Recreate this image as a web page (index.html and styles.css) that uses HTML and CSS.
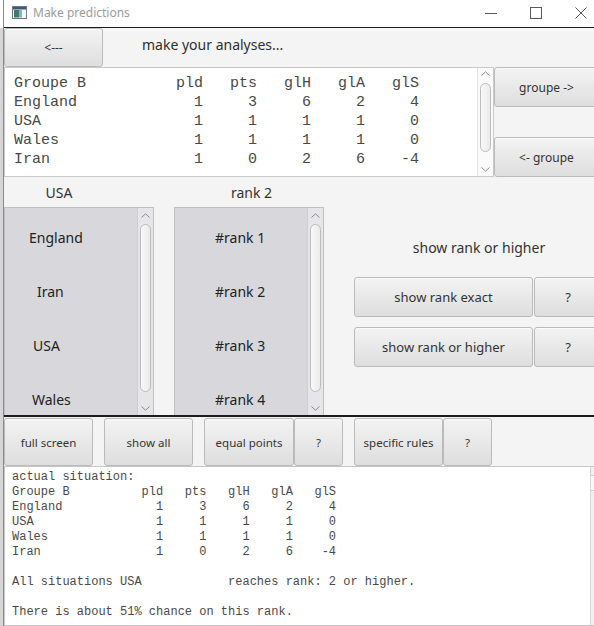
FILE: index.html
```html
<!DOCTYPE html>
<html lang="en">
<head>
<meta charset="utf-8">
<title>Make predictions</title>
<link rel="stylesheet" href="styles.css">
</head>
<body>
<div class="screen">
  <div class="edge"></div>
  <div class="window">
    <header class="titlebar">
      <svg class="appicon" width="15" height="13" viewBox="0 0 15 13">
        <rect x="0.5" y="0.5" width="14" height="12" fill="#f4f6f8" stroke="#6d7b86"/>
        <rect x="1" y="1" width="13" height="2.5" fill="#3c5a78"/>
        <rect x="2" y="4" width="5" height="7.5" fill="#3f7a6a"/>
        <rect x="7" y="4" width="3" height="7.5" fill="#8fb0bd"/>
      </svg>
      <span class="title">Make predictions</span>
      <div class="controls">
        <svg width="12" height="12" viewBox="0 0 12 12"><line x1="0" y1="6.5" x2="12" y2="6.5" stroke="#5a5a5a"/></svg>
        <svg width="12" height="12" viewBox="0 0 12 12"><rect x="0.5" y="0.5" width="11" height="11" fill="none" stroke="#5a5a5a"/></svg>
        <svg width="12" height="12" viewBox="0 0 12 12"><path d="M0.5 0.5 L11.5 11.5 M11.5 0.5 L0.5 11.5" stroke="#5a5a5a"/></svg>
      </div>
    </header>

    <div class="toprow">
      <button class="btn back">&lt;---</button>
      <span class="heading">make your analyses...</span>
    </div>

    <div class="groupbar">
      <div class="table">
<pre class="tabletext">Groupe B          pld   pts   glH   glA   glS
England             1     3     6     2     4
USA                 1     1     1     1     0
Wales               1     1     1     1     0
Iran                1     0     2     6    -4</pre>
        <div class="vscroll top-scroll">
          <div class="arrow"><svg width="9" height="5" viewBox="0 0 9 5"><polyline points="0.5,4.5 4.5,0.8 8.5,4.5" fill="none" stroke="#8c8c8c"/></svg></div>
          <div class="track"><div class="thumb"></div></div>
          <div class="arrow"><svg width="9" height="5" viewBox="0 0 9 5"><polyline points="0.5,0.5 4.5,4.2 8.5,0.5" fill="none" stroke="#8c8c8c"/></svg></div>
        </div>
      </div>
      <div class="groupbtns">
        <button class="btn small">groupe -&gt;</button>
        <button class="btn small">&lt;- groupe</button>
      </div>
    </div>

    <div class="captions">
      <span class="cap-team">USA</span>
      <span class="cap-rank">rank 2</span>
    </div>

    <div class="middle">
      <div class="listview teams">
        <ul>
          <li>England</li>
          <li>Iran</li>
          <li>USA</li>
          <li>Wales</li>
        </ul>
        <div class="vscroll list-scroll">
          <div class="arrow"><svg width="9" height="5" viewBox="0 0 9 5"><polyline points="0.5,4.5 4.5,0.8 8.5,4.5" fill="none" stroke="#8c8c8c"/></svg></div>
          <div class="track"><div class="thumb"></div></div>
          <div class="arrow"><svg width="9" height="5" viewBox="0 0 9 5"><polyline points="0.5,0.5 4.5,4.2 8.5,0.5" fill="none" stroke="#8c8c8c"/></svg></div>
        </div>
      </div>
      <div class="listview ranks">
        <ul>
          <li>#rank 1</li>
          <li>#rank 2</li>
          <li>#rank 3</li>
          <li>#rank 4</li>
        </ul>
        <div class="vscroll list-scroll">
          <div class="arrow"><svg width="9" height="5" viewBox="0 0 9 5"><polyline points="0.5,4.5 4.5,0.8 8.5,4.5" fill="none" stroke="#8c8c8c"/></svg></div>
          <div class="track"><div class="thumb"></div></div>
          <div class="arrow"><svg width="9" height="5" viewBox="0 0 9 5"><polyline points="0.5,0.5 4.5,4.2 8.5,0.5" fill="none" stroke="#8c8c8c"/></svg></div>
        </div>
      </div>
      <div class="options">
        <p class="optlabel">show rank or higher</p>
        <div class="optrow">
          <button class="btn opt">show rank exact</button>
          <button class="btn help">?</button>
        </div>
        <div class="optrow">
          <button class="btn opt">show rank or higher</button>
          <button class="btn help">?</button>
        </div>
      </div>
    </div>
    <div class="rule"></div>

    <div class="actions">
      <button class="btn act">full screen</button>
      <button class="btn act gap">show all</button>
      <button class="btn act gap wide">equal points</button>
      <button class="btn act q">?</button>
      <button class="btn act gap">specific rules</button>
      <button class="btn act q">?</button>
    </div>

    <div class="output">
<pre class="outtext">actual situation:
Groupe B          pld   pts   glH   glA   glS
England             1     3     6     2     4
USA                 1     1     1     1     0
Wales               1     1     1     1     0
Iran                1     0     2     6    -4

All situations USA            reaches rank: 2 or higher.

There is about 51% chance on this rank.</pre>
      <div class="stub"><div class="stubthumb"></div></div>
    </div>
  </div>
</div>
</body>
</html>
```

FILE: styles.css
```css
* { box-sizing: border-box; margin: 0; padding: 0; }
html, body { width: 594px; height: 626px; overflow: hidden; }
body {
  background: #f4f4f4;
  font-family: "Noto Sans", "Open Sans", sans-serif;
  color: #333;
}
.screen { display: flex; height: 626px; }
.edge {
  width: 4px;
  flex: none;
  background: linear-gradient(#ffffff 0 28px, #d6d6d6 28px);
  border-right: 1px solid #8a8a8a;
}
.window {
  width: 590px;
  flex: none;
  display: flex;
  flex-direction: column;
  overflow: hidden;
  background: #f4f4f4;
}

/* title bar */
.titlebar {
  height: 28px;
  flex: none;
  background: #fff;
  border-bottom: 1px solid #1e1e1e;
  display: flex;
  align-items: center;
  padding-left: 8px;
}
.appicon { flex: none; margin-top: -2px; }
.title { margin-left: 6px; font-size: 12px; color: #9b9b9b; margin-top: -2px; }
.controls {
  margin-left: auto;
  margin-right: 7px;
  display: flex;
  gap: 33px;
  margin-top: -2px;
}

/* buttons */
.btn {
  font-family: "Noto Sans", "Open Sans", sans-serif;
  color: #333;
  background: linear-gradient(#f3f3f3, #dedede);
  border: 1px solid #bababa;
  border-radius: 3px;
  box-shadow: inset 0 1px 0 #fbfbfb;
  font-size: 12px;
}

.toprow { height: 39px; flex: none; display: flex; align-items: center; }
.back { width: 99px; height: 39px; font-size: 12px; }
.heading { margin-left: 39px; font-size: 14px; color: #2f2f2f; margin-top: -6px; }

/* group table */
.groupbar { height: 110px; flex: none; display: flex; }
.table {
  width: 490px;
  flex: none;
  background: #fff;
  border: 1px solid #c9c9c9;
  display: flex;
}
.tabletext {
  flex: 1;
  font-family: "Liberation Mono", "Courier New", monospace;
  font-size: 15px;
  line-height: 19px;
  padding: 6px 0 0 9px;
  color: #484848;
}
.groupbtns {
  width: 105px;
  flex: none;
  display: flex;
  flex-direction: column;
  justify-content: space-between;
}
.groupbtns .btn { height: 40px; }

/* scrollbars */
.vscroll {
  width: 16px;
  flex: none;
  display: flex;
  flex-direction: column;
}
.vscroll .arrow { display: flex; align-items: center; justify-content: center; flex: none; }
.vscroll .track { flex: 1; }
.vscroll .thumb {
  margin: 0 2px;
  border: 1px solid #bcbcbc;
  border-radius: 6px;
  background: linear-gradient(to right, #f8f8f8, #ebebeb);
}
.top-scroll { background: #fafafa; border-left: 1px solid #e2e2e2; }
.top-scroll .arrow:first-child { height: 11px; }
.top-scroll .arrow:last-child { height: 14px; }
.top-scroll .thumb { margin-top: 4px; height: 69px; }

.list-scroll { background: #e6e6e8; border-left: 1px solid #cfcfd2; }
.list-scroll .arrow { height: 14px; }
.list-scroll .thumb { margin-top: 2px; height: 168px; }

/* captions */
.captions { height: 30px; flex: none; display: flex; align-items: center; font-size: 14px; color: #333; }
.cap-team { width: 110px; text-align: center; }
.cap-rank { width: 275px; text-align: center; }

/* lists */
.middle { height: 208px; flex: none; display: flex; }
.listview {
  width: 150px;
  flex: none;
  background: #d8d7dc;
  border: 1px solid #bfbfc2;
  border-bottom: none;
  display: flex;
}
.listview.ranks { margin-left: 20px; }
.listview ul { flex: 1; list-style: none; padding-top: 3px; }
.listview li { height: 54px; line-height: 54px; font-size: 14px; color: #222; white-space: nowrap; }
.teams li:nth-child(1) { padding-left: 24px; }
.teams li:nth-child(2) { padding-left: 32px; }
.teams li:nth-child(3) { padding-left: 28px; }
.teams li:nth-child(4) { padding-left: 27px; }
.ranks li { padding-left: 40px; }

.options { flex: 1; padding-left: 30px; padding-top: 30px; }
.optlabel { width: 250px; text-align: center; font-size: 14px; line-height: 22px; color: #333; margin-bottom: 18px; }
.optrow { display: flex; height: 40px; margin-bottom: 10px; }
.opt { width: 179px; height: 40px; font-size: 13px; }
.help { width: 68px; height: 40px; margin-left: 1px; font-size: 13px; flex: none; }

.rule { height: 2px; flex: none; background: #1c1c1c; }

/* action buttons */
.actions { height: 49px; flex: none; display: flex; padding-top: 1px; }
.act { width: 89px; height: 48px; font-size: 11.5px; flex: none; }
.act.gap { margin-left: 11px; }
.act.wide { width: 90px; }
.act.q { width: 49px; }

/* output */
.output {
  flex: 1;
  display: flex;
  background: #fff;
  border: 1px solid #c6c6c6;
  border-right: none;
}
.outtext {
  flex: 1;
  font-family: "Liberation Mono", "Courier New", monospace;
  font-size: 12px;
  line-height: 15px;
  padding: 3px 0 0 7px;
  color: #4a4a4a;
}
.stub { width: 4px; flex: none; background: #f0f0f0; border-left: 1px solid #d6d6d6; padding-top: 8px; }
.stubthumb { height: 16px; border-top: 1px solid #cfcfcf; border-bottom: 1px solid #cfcfcf; background: #f7f7f7; }
```
